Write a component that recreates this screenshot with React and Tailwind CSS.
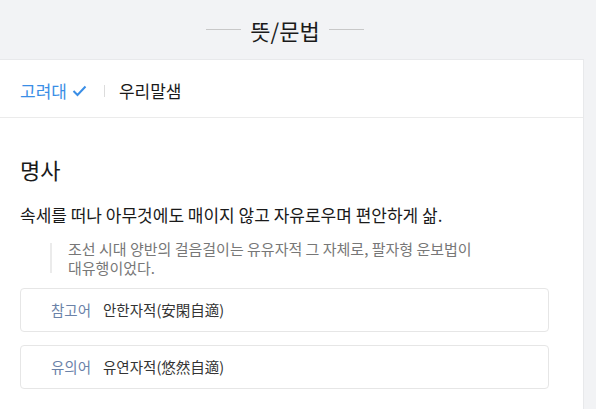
const FONT = { fontFamily: '"Noto Sans CJK KR", "Noto Sans", sans-serif' };

const related = [
  { label: '참고어', word: '안한자적(安閑自適)' },
  { label: '유의어', word: '유연자적(悠然自適)' },
];

function CheckIcon() {
  return (
    <svg width="15" height="12" viewBox="0 0 15 12" fill="none" stroke="#3a8ee6" strokeWidth="2">
      <path d="M1.5 6 L5.5 10 L13.5 1.5" />
    </svg>
  );
}

export default function App() {
  return (
    <div className="min-h-[409px] w-[596px] bg-[#f2f3f5] text-[#222]" style={FONT}>
      {/* section title */}
      <div className="flex h-[59px] items-center justify-center pr-[26px]">
        <span className="h-px w-[35px] bg-[#c8c8c8]" />
        <h2 className="mx-[9px] text-[22px] leading-none text-[#1a1a1a]">뜻/문법</h2>
        <span className="h-px w-[35px] bg-[#c8c8c8]" />
      </div>

      <div className="w-[584px] border-r border-t border-[#e8e9eb] bg-white pb-5">
        {/* dictionary tabs */}
        <div className="flex h-[58px] items-center border-b border-[#ebebeb] pl-5 pt-1 text-[17px]">
          <span className="text-[#3a8ee6]">고려대</span>
          <span className="ml-[5px] flex items-center"><CheckIcon /></span>
          <span className="ml-[17px] mr-[14px] h-[12px] w-px bg-[#dcdcdc]" />
          <span className="text-[#1a1a1a]">우리말샘</span>
        </div>

        <div className="pl-5 pr-[34px] pt-[36px]">
          <h3 className="text-[22px] leading-[30px] text-[#1a1a1a]">명사</h3>
          <p className="mt-[19px] text-[17px] leading-[24px] text-[#1a1a1a]">
            속세를 떠나 아무것에도 매이지 않고 자유로우며 편안하게 삶.
          </p>
          <div className="relative ml-[30px] mt-[12px] max-w-[452px] break-keep pl-[18px] text-[15px] leading-[19px] text-[#777] before:absolute before:left-0 before:top-[4px] before:h-[30px] before:w-[2px] before:bg-[#ebebeb]">
            조선 시대 양반의 걸음걸이는 유유자적 그 자체로, 팔자형 운보법이 대유행이었다.
          </div>

          <div className="mt-[11px] flex flex-col gap-[13px]">
            {related.map((r) => (
              <div
                key={r.label}
                className="flex h-[44px] items-center gap-3 rounded border border-[#e6e6e6] pl-[30px] text-[14.5px]"
              >
                <span className="text-[#6b82a8]">{r.label}</span>
                <span className="text-[#333]">{r.word}</span>
              </div>
            ))}
          </div>
        </div>
      </div>
    </div>
  );
}
